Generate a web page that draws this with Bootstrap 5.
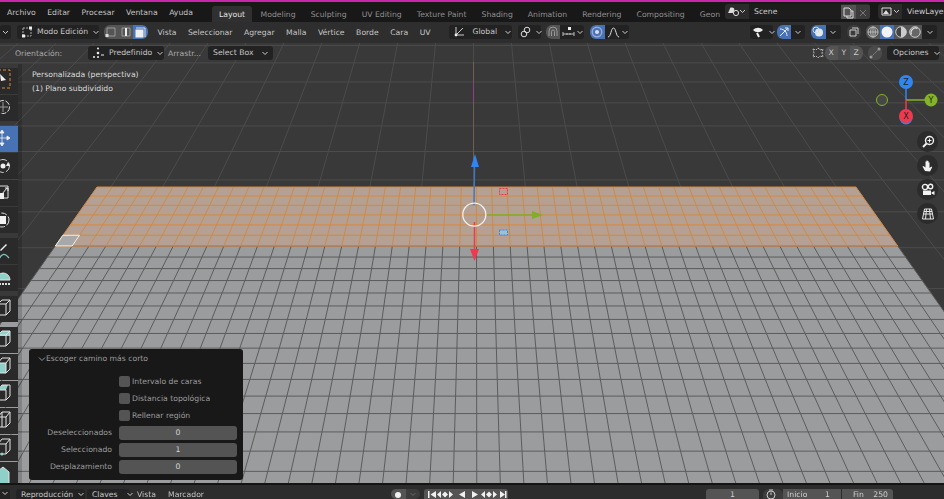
<!DOCTYPE html>
<html lang="es">
<head>
  <meta charset="UTF-8">
  <title>Blender - Modo Edición</title>
  <link href="https://cdn.jsdelivr.net/npm/bootstrap@5.3.0/dist/css/bootstrap.min.css" rel="stylesheet">
  <style>
    html, body { height: 499px; overflow: hidden; }
    body { background: #393939; color: #d0d0d0; font: 7.7px/1 "DejaVu Sans", sans-serif; filter: blur(.3px); }
    svg { display: block; flex: none; }
    .pink-line { height: 2px; background: #c727a9; }
    .top-bar { height: 20px; background: #181818; }
    .top-bar > * { flex: none; }
    .menu-txt { padding-top: 7px; color: #c4c4c4; }
    .top-menu { width: 212px; padding-left: 7px; }
    .top-menu span { margin-right: 11.5px; }
    .work-tab { height: 16px; margin-top: 4px; padding: 5px 7.55px 0; color: #8f8f8f; white-space: nowrap; }
    .work-tab.on { background: #303030; color: #e2e2e2; border-radius: 3px 3px 0 0; width: 40px; padding-left: 7px; margin-right: 1px; }
    .tab-strip { width: 513px; overflow: hidden; }
    .scene-box { height: 15px; margin-top: 2px; background: #2b2b2b; border-radius: 3px; }
    .scene-name { background: #1d1d1d; padding: 4px 5px; color: #cfcfcf; }
    .head-bar { height: 21px; background: #2e2e2e; padding-top: 3px; }
    .head-bar > * { flex: none; }
    .drop { height: 14px; background: #222; border-radius: 3px; padding: 0 4px; color: #c8c8c8; gap: 4px; white-space: nowrap; }
    .drop .chev { margin-left: auto; }
    .tog { height: 14px; width: 14.5px; background: #545454; }
    .tog.on { background: #4772b3; }
    .tog.dim { background: #3c3c3c; }
    .shade-set .tog { width: 14px; }
    .head-menu span { margin-right: 11.5px; color: #c6c6c6; }
    .view-port { height: 440px; }
    .back-grid { position: absolute; inset: 0; }
    .tool-row { position: absolute; left: 0; right: 0; top: 2.5px; height: 14px; }
    .tool-txt { color: #aaa; }
    .side-tools { position: absolute; left: 0; top: 25px; width: 18px; }
    .side-strip { position: absolute; left: 18px; top: 21px; bottom: 0; width: 4px; background: rgba(0,0,0,.16); }
    .tool-btn { height: 26px; background: #2a2a2a; margin-bottom: 1px; }
    .tool-btn.on { background: #4772b3; }
    .tool-gap { margin-top: 5px; }
    .view-info { position: absolute; left: 32px; top: 25px; color: #dcdcdc; line-height: 14px; }
    .nav-stack { position: absolute; left: 917px; top: 88px; gap: 3px; }
    .nav-btn { width: 21px; height: 21px; border-radius: 50%; background: #2b2b2b; }
    .op-panel { position: absolute; left: 29px; top: 306px; width: 214px; height: 131px; background: #181818; border-radius: 3px; padding: 6px 6px 0 9px; color: #9c9c9c; }
    .op-title { height: 18px; }
    .op-row { height: 17px; }
    .op-lbl { width: 74px; margin-right: 7px; text-align: right; }
    .op-check { width: 11px; height: 11px; background: #545454; border-radius: 2px; margin-right: 2px; }
    .op-num { width: 118px; height: 14px; background: #545454; border-radius: 3px; text-align: center; line-height: 14px; color: #d4d4d4; }
    .time-bar { height: 16px; background: #2c2c2c; border-top: 2px solid #141414; padding-top: 4px; }
    .time-bar > * { flex: none; }
    .time-field { height: 10px; background: #545454; border-radius: 3px 3px 0 0; text-align: center; padding-top: 2px; color: #cfcfcf; }
    .time-drop { height: 10px; background: #222; border-radius: 3px 3px 0 0; padding: 2px 0 0 5px; gap: 4px; color: #c8c8c8; }
  </style>
</head>
<body>
  <div class="pink-line"></div>

  <!-- top bar -->
  <div class="top-bar d-flex">
    <div class="top-menu menu-txt d-flex"><span>Archivo</span><span>Editar</span><span>Procesar</span><span>Ventana</span><span>Ayuda</span></div>
    <div class="tab-strip d-flex">
      <div class="work-tab on">Layout</div>
      <div class="work-tab">Modeling</div>
      <div class="work-tab">Sculpting</div>
      <div class="work-tab">UV Editing</div>
      <div class="work-tab">Texture Paint</div>
      <div class="work-tab">Shading</div>
      <div class="work-tab">Animation</div>
      <div class="work-tab">Rendering</div>
      <div class="work-tab">Compositing</div>
      <div class="work-tab">Geon</div>
    </div>
    <div class="scene-box d-flex align-items-center overflow-hidden">
      <svg width="24" height="15" viewBox="0 0 24 15"><circle cx="7" cy="6" r="2.4" fill="#ddd"/><path d="M3 9l3-6 2 6z" fill="#ddd"/><circle cx="11" cy="9" r="2.6" fill="none" stroke="#ddd"/><path d="M15 6l2.5 2.5L20 6" fill="none" stroke="#ccc"/></svg>
      <div class="scene-name" style="width:92px">Scene</div>
      <div class="tog"><svg width="14" height="15" viewBox="0 0 14 15"><path d="M3 3h5l2 2v6H3zM6 11v2h6V6h-2" fill="none" stroke="#ddd"/></svg></div>
      <div class="tog dim"><svg width="14" height="15" viewBox="0 0 14 15"><path d="M4 5l6 6M10 5l-6 6" stroke="#777"/></svg></div>
    </div>
    <div class="scene-box d-flex align-items-center overflow-hidden ms-2" style="width:68px">
      <svg width="24" height="15" viewBox="0 0 24 15"><path d="M4 4h9v7H4z" fill="none" stroke="#ddd"/><path d="M5 10l3-4 3 4z" fill="#ddd"/><path d="M16 6l2.5 2.5L21 6" fill="none" stroke="#ccc"/></svg>
      <div class="scene-name flex-grow-1 text-nowrap">ViewLayer</div>
    </div>
  </div>

  <!-- 3d view header -->
  <div class="head-bar d-flex">
    <div class="drop d-flex align-items-center" style="width:11px;padding:0 0 0 1px"><svg width="9" height="14" viewBox="0 0 9 14"><path d="M2 6l2.5 2.5L7 6" fill="none" stroke="#ccc"/></svg></div>
    <div class="drop d-flex align-items-center" style="width:82px;margin:0 5px 0 6px">
      <svg width="12" height="14" viewBox="0 0 12 14"><path d="M2 3h8v8H2z" fill="none" stroke="#aaa" stroke-dasharray="2 1"/><rect x="8" y="1.5" width="3" height="3" fill="#eee"/><rect x="1" y="9.5" width="3" height="3" fill="#eee"/></svg>
      <span>Modo Edición</span>
      <svg class="chev" width="8" height="14" viewBox="0 0 8 14"><path d="M1.5 6L4 8.5 6.5 6" fill="none" stroke="#ccc"/></svg>
    </div>
    <div class="d-flex" style="margin-right:10px">
      <div class="tog rounded-start"><svg width="14" height="14" viewBox="0 0 14 14"><path d="M3 3h8v8H3z" fill="none" stroke="#999"/><rect x="1.5" y="9" width="3" height="3" fill="#ddd"/></svg></div>
      <div class="tog"><svg width="14" height="14" viewBox="0 0 14 14"><path d="M3 3h8v8H3z" fill="none" stroke="#999"/><path d="M7 3v8" stroke="#eee" stroke-width="2"/></svg></div>
      <div class="tog on rounded-end"><svg width="14" height="14" viewBox="0 0 14 14"><path d="M3 3h9v9" fill="none" stroke="#dde"/><rect x="2.5" y="4.5" width="8" height="8" fill="#eee"/></svg></div>
    </div>
    <div class="head-menu d-flex pt-1" style="width:291px"><span>Vista</span><span>Seleccionar</span><span>Agregar</span><span>Malla</span><span>Vértice</span><span>Borde</span><span>Cara</span><span>UV</span></div>
    <div class="drop d-flex align-items-center" style="width:63px;margin-right:6px;gap:7px">
      <svg width="13" height="14" viewBox="0 0 13 14"><path d="M3 2v8h8M3 10l7-7" fill="none" stroke="#ccc"/><circle cx="3" cy="10" r="1.4" fill="#eee"/></svg>
      <span>Global</span>
      <svg class="chev" width="8" height="14" viewBox="0 0 8 14"><path d="M1.5 6L4 8.5 6.5 6" fill="none" stroke="#ccc"/></svg>
    </div>
    <div class="drop d-flex align-items-center" style="width:23px;margin-right:5px;padding:0 2px">
      <svg width="11" height="14" viewBox="0 0 11 14"><circle cx="7" cy="5" r="2.8" fill="none" stroke="#ddd"/><circle cx="4" cy="9" r="2.8" fill="none" stroke="#ddd"/></svg>
      <svg class="chev" width="8" height="14" viewBox="0 0 8 14"><path d="M1.5 6L4 8.5 6.5 6" fill="none" stroke="#ccc"/></svg>
    </div>
    <div class="tog rounded-start"><svg width="14" height="14" viewBox="0 0 14 14"><path d="M3 11V6a4 4 0 0 1 8 0v5M5.5 11V6.5a1.5 1.5 0 0 1 3 0V11" fill="none" stroke="#999"/></svg></div>
    <div class="drop d-flex align-items-center" style="width:24px;margin-right:6px;padding:0 1px;gap:0;border-radius:0 3px 3px 0">
      <svg width="15" height="14" viewBox="0 0 15 14"><rect x="7" y="2" width="3" height="3" fill="#eee"/><path d="M2 7v4M13 7v4M2 9h11M6 8v2M9 8v2" stroke="#bbb"/></svg>
      <svg class="chev" width="8" height="14" viewBox="0 0 8 14"><path d="M1.5 6L4 8.5 6.5 6" fill="none" stroke="#ccc"/></svg>
    </div>
    <div class="tog on rounded-start"><svg width="14" height="14" viewBox="0 0 14 14"><circle cx="7" cy="7" r="4.8" fill="none" stroke="#9ad" stroke-width="1.4"/><circle cx="7" cy="7" r="2" fill="#dde"/></svg></div>
    <div class="drop d-flex align-items-center" style="width:24px;padding:0 1px;gap:0;border-radius:0 3px 3px 0">
      <svg width="15" height="14" viewBox="0 0 15 14"><path d="M2 12C5 12 5 3 7.5 3S10 12 13 12" fill="none" stroke="#ddd"/></svg>
      <svg class="chev" width="8" height="14" viewBox="0 0 8 14"><path d="M1.5 6L4 8.5 6.5 6" fill="none" stroke="#ccc"/></svg>
    </div>

    <div class="drop d-flex align-items-center" style="margin-left:121px;width:23px;padding:0 2px">
      <svg width="12" height="14" viewBox="0 0 12 14"><path d="M1 5c3-3 7-3 10 0-3 3-7 3-10 0z" fill="#eee"/><path d="M5 8l2 4" stroke="#eee" stroke-width="2"/></svg>
      <svg class="chev" width="8" height="14" viewBox="0 0 8 14"><path d="M1.5 6L4 8.5 6.5 6" fill="none" stroke="#ccc"/></svg>
    </div>
    <div class="tog on rounded-start ms-1"><svg width="14" height="14" viewBox="0 0 14 14"><path d="M3 11L11 3M3 4c4 0 7 3 7 7M8 3h3v3" fill="none" stroke="#e8eef8"/></svg></div>
    <div class="drop d-flex align-items-center justify-content-center" style="width:14px;padding:0;border-radius:0 3px 3px 0;margin-right:6px"><svg width="8" height="14" viewBox="0 0 8 14"><path d="M1.5 6L4 8.5 6.5 6" fill="none" stroke="#ccc"/></svg></div>
    <div class="tog on rounded-start"><svg width="14" height="14" viewBox="0 0 14 14"><circle cx="8" cy="7.5" r="4" fill="#e8e8e8"/><circle cx="5" cy="5" r="3" fill="none" stroke="#cde"/></svg></div>
    <div class="drop d-flex align-items-center justify-content-center" style="width:15px;padding:0;border-radius:0 3px 3px 0;margin-right:6px"><svg width="8" height="14" viewBox="0 0 8 14"><path d="M1.5 6L4 8.5 6.5 6" fill="none" stroke="#ccc"/></svg></div>
    <div class="tog dim rounded me-1"><svg width="14" height="14" viewBox="0 0 14 14"><path d="M5 3h6v6M3 5h6v6H3z" fill="none" stroke="#ccc"/></svg></div>
    <div class="shade-set d-flex" style="margin-left:1px">
      <div class="tog rounded-start"><svg width="14" height="14" viewBox="0 0 14 14"><circle cx="7" cy="7" r="5" fill="none" stroke="#bbb"/><path d="M2 7h10M7 2v10" stroke="#bbb"/><ellipse cx="7" cy="7" rx="2.3" ry="5" fill="none" stroke="#bbb"/></svg></div>
      <div class="tog on"><svg width="14" height="14" viewBox="0 0 14 14"><circle cx="7" cy="7" r="5.5" fill="#f2f2f2"/></svg></div>
      <div class="tog"><svg width="14" height="14" viewBox="0 0 14 14"><circle cx="7" cy="7" r="5.3" fill="#444" stroke="#ccc"/><path d="M7 1.7a5.3 5.3 0 0 1 0 10.6z" fill="#ccc"/></svg></div>
      <div class="tog"><svg width="14" height="14" viewBox="0 0 14 14"><circle cx="7" cy="7" r="5.3" fill="#666" stroke="#ccc"/><path d="M3.5 9.5a4.5 4.5 0 0 1 6-6" fill="none" stroke="#ddd" stroke-width="1.2"/></svg></div>
      <div class="drop d-flex align-items-center justify-content-center" style="width:15px;padding:0;border-radius:0 3px 3px 0"><svg width="8" height="14" viewBox="0 0 8 14"><path d="M1.5 6L4 8.5 6.5 6" fill="none" stroke="#ccc"/></svg></div>
    </div>
  </div>

  <!-- 3d viewport -->
  <div class="view-port position-relative overflow-hidden">
    <svg id="scene" class="back-grid" width="944" height="440" viewBox="0 43 944 440"></svg>
    <div class="side-strip"></div>

    <div class="tool-row d-flex">
      <div class="tool-txt pt-1" style="margin-left:15px;width:73px">Orientación:</div>
      <div class="drop d-flex align-items-center" style="width:76px;margin-right:4px">
        <svg width="13" height="14" viewBox="0 0 13 14"><circle cx="6" cy="2.5" r="1" fill="#eee"/><circle cx="6" cy="7" r="1.3" fill="#eee"/><circle cx="2" cy="11" r="1" fill="#eee"/><circle cx="6" cy="11" r="1" fill="#eee"/><path d="M9 9h3" stroke="#eee"/></svg>
        <span>Predefinido</span>
        <svg class="chev" width="8" height="14" viewBox="0 0 8 14"><path d="M1.5 6L4 8.5 6.5 6" fill="none" stroke="#ccc"/></svg>
      </div>
      <div class="tool-txt pt-1" style="width:40px">Arrastr...</div>
      <div class="drop d-flex align-items-center" style="width:65px;padding-left:5px"><span>Select Box</span><svg class="chev" width="8" height="14" viewBox="0 0 8 14"><path d="M1.5 6L4 8.5 6.5 6" fill="none" stroke="#ccc"/></svg></div>
      <svg style="margin-left:537px" width="15" height="14" viewBox="0 0 15 14"><path d="M3 3l3 1 2-2 2 2 3-1-1 4 1 4-3-1-2 2-2-2-3 1 1-4z" fill="none" stroke="#bbb" stroke-dasharray="2 1"/></svg>
      <div class="d-flex rounded overflow-hidden" style="margin-right:5px">
        <div class="tog text-center" style="width:12.5px;padding-top:3px">X</div>
        <div class="tog text-center" style="width:12.5px;padding-top:3px;background:#4a4a4a">Y</div>
        <div class="tog text-center" style="width:12.5px;padding-top:3px">Z</div>
      </div>
      <div class="tog rounded" style="margin-right:5px;background:#4a4a4a"><svg width="14" height="14" viewBox="0 0 14 14"><path d="M3 11L11 3" stroke="#888" stroke-dasharray="2 1"/><circle cx="3" cy="11" r="1.5" fill="#999"/><circle cx="11" cy="3" r="1.5" fill="#999"/></svg></div>
      <div class="drop d-flex align-items-center" style="width:52px;padding-left:6px"><span>Opciones</span><svg class="chev" width="8" height="14" viewBox="0 0 8 14"><path d="M1.5 6L4 8.5 6.5 6" fill="none" stroke="#ccc"/></svg></div>
    </div>

    <div class="view-info">Personalizada (perspectiva)<br>(1) Plano subdividido</div>

    <!-- left tool column -->
    <div class="side-tools">
      <div class="tool-btn"><svg width="18" height="26" viewBox="0 0 18 26"><rect x="-2" y="2" width="12" height="18" fill="none" stroke="#d98a3a" stroke-dasharray="3 2"/><path d="M0 6l6 6-5 1z" fill="#f2f2f2"/></svg></div>
      <div class="tool-btn"><svg width="18" height="26" viewBox="0 0 18 26"><circle cx="3" cy="12" r="6.5" fill="none" stroke="#ddd" stroke-dasharray="5 1.5"/><path d="M3 7v10M-2 12h10" stroke="#999"/></svg></div>
      <div class="tool-btn on tool-gap"><svg width="18" height="26" viewBox="0 0 18 26"><path d="M2 4l2 3H0zM2 20l2-3H0zM10 12l-3-2v4zM2 7v10M-1 12h8" fill="#f4f4f4" stroke="#f4f4f4" stroke-width=".8"/></svg></div>
      <div class="tool-btn"><svg width="18" height="26" viewBox="0 0 18 26"><circle cx="3" cy="13" r="6.5" fill="none" stroke="#ccc" stroke-dasharray="7 2"/><circle cx="3" cy="13" r="2.5" fill="#f0f0f0"/><path d="M8 9l2 4h-4z" fill="#eee"/></svg></div>
      <div class="tool-btn"><svg width="18" height="26" viewBox="0 0 18 26"><path d="M-1 6h9v12h-9" fill="none" stroke="#ddd"/><rect x="-1" y="13" width="5" height="6" fill="#eee"/><path d="M2 14l5-6M5 8h3v3" fill="none" stroke="#eee"/></svg></div>
      <div class="tool-btn"><svg width="18" height="26" viewBox="0 0 18 26"><circle cx="2" cy="13" r="7" fill="none" stroke="#ddd" stroke-dasharray="6 2"/><rect x="-2" y="9" width="8" height="8" fill="#f2f2f2"/></svg></div>
      <div class="tool-btn tool-gap"><svg width="18" height="26" viewBox="0 0 18 26"><path d="M0 12l6-6 1 1-6 6z" fill="#eee"/><path d="M-1 21c3-6 6-6 10-1" fill="none" stroke="#7ec4b8" stroke-width="1.3"/></svg></div>
      <div class="tool-btn"><svg width="18" height="26" viewBox="0 0 18 26"><path d="M-4 15a7 7 0 0 1 14 0z" fill="#8fd0c8" stroke="#e4e4e4"/><path d="M-4 19h15" stroke="#ddd" stroke-width="2" stroke-dasharray="2 1"/></svg></div>
      <div class="tool-btn tool-gap"><svg width="18" height="26" viewBox="0 0 18 26"><path d="M-2 8l4-4h8v11l-4 4h-8zM-2 8h8l4-4M6 8v11" fill="none" stroke="#e4e4e4"/></svg></div>
      <div class="tool-btn tool-gap"><svg width="18" height="26" viewBox="0 0 18 26"><path d="M-2 8l4-4h8v5h-12z" fill="#8fd0c8"/><path d="M-2 8l4-4h8v11l-4 4h-8zM-2 8h8l4-4M6 8v11" fill="none" stroke="#e4e4e4"/></svg></div>
      <div class="tool-btn"><svg width="18" height="26" viewBox="0 0 18 26"><path d="M-2 9h8v10h-8z" fill="#8fd0c8"/><path d="M-2 9l4-5h8v11l-4 4h-8zM-2 9h8l4-5M6 9v10" fill="none" stroke="#e4e4e4"/></svg></div>
      <div class="tool-btn"><svg width="18" height="26" viewBox="0 0 18 26"><path d="M-2 9l4-5h6l-2 5z" fill="#8fd0c8"/><path d="M-2 9l4-5h8v11l-4 4h-8zM-2 9h8M6 9v10" fill="none" stroke="#e4e4e4"/></svg></div>
      <div class="tool-btn"><svg width="18" height="26" viewBox="0 0 18 26"><path d="M-2 9l4-5h8v11l-4 4h-8zM-2 9h8l4-5M6 9v10M2 4v15" fill="none" stroke="#e4e4e4"/></svg></div>
      <div class="tool-btn"><svg width="18" height="26" viewBox="0 0 18 26"><path d="M-2 9l4-5h8v11l-4 4h-8zM-2 9h8l4-5M6 9v10" fill="none" stroke="#e4e4e4"/><circle cx="2" cy="19" r="1.5" fill="#8fd0c8"/></svg></div>
      <div class="tool-btn"><svg width="18" height="26" viewBox="0 0 18 26"><path d="M-2 24V9l5-4 6 5v14z" fill="#8fd0c8" stroke="#e4e4e4"/></svg></div>
    </div>

    <!-- navigation buttons -->
    <div class="nav-stack d-flex flex-column">
      <div class="nav-btn d-flex align-items-center justify-content-center"><svg width="14" height="14" viewBox="0 0 14 14"><circle cx="8.5" cy="5.5" r="4" fill="none" stroke="#f2f2f2" stroke-width="1.4"/><path d="M6.5 5.5h4M8.5 3.5v4" stroke="#f2f2f2"/><path d="M2 12l3.5-3.5" stroke="#f2f2f2" stroke-width="2"/></svg></div>
      <div class="nav-btn d-flex align-items-center justify-content-center"><svg width="14" height="14" viewBox="0 0 14 14"><path d="M4 12L1.5 7.5l1-.5L4.5 8.5V2.500h1V7V1.500h1V7V2h1v5.500V3.500h1V9l2-1.500.7.7L9 12.500z" fill="#f2f2f2"/></svg></div>
      <div class="nav-btn d-flex align-items-center justify-content-center"><svg width="14" height="14" viewBox="0 0 14 14"><circle cx="4" cy="4" r="2.6" fill="none" stroke="#f2f2f2" stroke-width="1.4"/><circle cx="9.5" cy="3.5" r="2.2" fill="none" stroke="#f2f2f2" stroke-width="1.4"/><rect x="2" y="7.5" width="8" height="4.5" fill="#f2f2f2"/><path d="M10.5 9.5l3-1.5v4l-3-1.5z" fill="#f2f2f2"/></svg></div>
      <div class="nav-btn d-flex align-items-center justify-content-center"><svg width="14" height="14" viewBox="0 0 14 14"><path d="M3.5 2h7l2 10h-11zM2.500 7h9M5.500 2l-1 10M8.500 2l1 10M3 4.500h8" fill="none" stroke="#e8e8e8"/></svg></div>
    </div>

    <!-- last operator panel -->
    <div class="op-panel">
      <div class="op-title d-flex">
        <svg width="8" height="8" viewBox="0 0 8 8"><path d="M1 2.5L4 5.5 7 2.5" fill="none" stroke="#999"/></svg>
        <span>Escoger camino más corto</span>
      </div>
      <div class="op-row d-flex align-items-center"><div class="op-lbl"></div><div class="op-check"></div>Intervalo de caras</div>
      <div class="op-row d-flex align-items-center"><div class="op-lbl"></div><div class="op-check"></div>Distancia topológica</div>
      <div class="op-row d-flex align-items-center"><div class="op-lbl"></div><div class="op-check"></div>Rellenar región</div>
      <div class="op-row d-flex align-items-center"><div class="op-lbl">Deseleccionados</div><div class="op-num">0</div></div>
      <div class="op-row d-flex align-items-center"><div class="op-lbl">Seleccionado</div><div class="op-num">1</div></div>
      <div class="op-row d-flex align-items-center"><div class="op-lbl">Desplazamiento</div><div class="op-num">0</div></div>
    </div>
  </div>

  <!-- timeline header -->
  <div class="time-bar d-flex">
    <div class="time-drop" style="width:10px;padding-left:1px"><svg width="8" height="6" viewBox="0 0 8 6"><path d="M1.5 1L4 3.5 6.5 1" fill="none" stroke="#ccc"/></svg></div>
    <div class="time-drop d-flex" style="width:69px;margin-left:6px">Reproducción<svg width="8" height="6" viewBox="0 0 8 6"><path d="M1.5 2L4 4.5 6.5 2" fill="none" stroke="#ccc"/></svg></div>
    <div class="time-drop d-flex" style="width:43px;margin-left:2px">Claves<svg class="ms-1" width="8" height="6" viewBox="0 0 8 6"><path d="M1.5 2L4 4.5 6.5 2" fill="none" stroke="#ccc"/></svg></div>
    <div class="menu-txt" style="padding-top:2px;margin-left:7px;width:31px">Vista</div>
    <div class="menu-txt" style="padding-top:2px;width:223px">Marcador</div>
    <div class="tog rounded-start" style="height:10px"><svg width="14" height="10" viewBox="0 0 14 10"><circle cx="7" cy="6" r="3" fill="#f0f0f0"/></svg></div>
    <div class="tog dim rounded-end" style="height:10px;margin-right:4px"><svg width="14" height="10" viewBox="0 0 14 10"><path d="M4.5 4L7 6.5 9.5 4" fill="none" stroke="#666"/></svg></div>
    <div class="d-flex" style="width:84px;height:10px;background:#545454;border-radius:3px 3px 0 0;margin-right:198px">
      <svg width="84" height="10" viewBox="0 1 84 10"><g fill="#f0f0f0"><path d="M4 3h1.5v7H4zM12 3v7L6.5 6.5zM18 6.5l3-3 3 3-3 3zM17 3v7l-4-3.5zM25 3v7l4-3.5zM41 3v7l-6-3.5zM48 3v7l6-3.5zM62 6.5l3-3 3 3-3 3zM61 3v7l-4-3.5zM69 3v7l4-3.5zM76 3v7l5-3.5zM81 3h1.5v7H81z"/></g></svg>
    </div>
    <div class="time-field" style="width:53px;margin-right:4px">1</div>
    <div class="d-flex" style="width:130px">
      <div class="tog rounded-top" style="height:10px;width:20px;background:#3c3c3c"><svg width="20" height="10" viewBox="0 1 20 10"><circle cx="8" cy="7" r="4" fill="none" stroke="#ccc"/><path d="M8 7V4.500M6 2h4" stroke="#ccc"/></svg></div>
      <div class="time-field d-flex justify-content-between" style="width:58px;padding:2px 11px 0 4px;border-radius:0;margin-right:1px"><span>Inicio</span><span>1</span></div>
      <div class="time-field d-flex justify-content-between" style="width:51px;padding:2px 5px 0 11px;border-radius:0 3px 0 0"><span>Fin</span><span>250</span></div>
    </div>
  </div>

  <script src="https://cdn.jsdelivr.net/npm/bootstrap@5.3.0/dist/js/bootstrap.bundle.min.js"></script>
  <script>
    const NS = 'http://www.w3.org/2000/svg';
    const scene = document.getElementById('scene');
    const VY = -350;
    const PLANE_X = 476, FLOOR_X = 473.5;
    const N = 50, OFF_L = -0.7058, OFF_R = 0.7076;
    const rowStep = 0.0000307, bigStep = 0.000107;

    function add(tag, attrs) {
      const el = document.createElementNS(NS, tag);
      for (const k in attrs) el.setAttribute(k, attrs[k]);
      scene.appendChild(el);
      return el;
    }
    function line(x1, y1, x2, y2, stroke, w) {
      add('line', { x1, y1, x2, y2, stroke, 'stroke-width': w || 1 });
    }
    const xAt = (off, y) => PLANE_X + off * (y - VY);
    const rowY = r => 1 / (1 / 537 - r * rowStep) + VY;

    // floor grid behind the plane
    add('rect', { x: 0, y: 43, width: 944, height: 440, fill: '#393939' });
    for (let i = -20; i <= 20; i++) {
      const off = i * 0.0965;
      line(FLOOR_X + off * (43 - VY), 43, FLOOR_X + off * (483 - VY), 483, '#4c4c4c');
    }
    for (let k = -4; k <= 6; k++) {
      const y = 1 / (0.001887 + k * bigStep) + VY;
      line(0, y, 944, y, '#4c4c4c');
    }

    // subdivided plane: gray part, then selected band
    const Y_SEL = rowY(6);
    const poly = (y1, y2, fill) => add('polygon', {
      points: [xAt(OFF_L, y1), y1, xAt(OFF_R, y1), y1, xAt(OFF_R, y2), y2, xAt(OFF_L, y2), y2].join(','), fill });
    poly(Y_SEL, 490, '#9b9c9e');
    poly(187, Y_SEL, '#b5a194');
    for (let r = 6; rowY(r) < 490; r++) {
      const y = rowY(r);
      line(xAt(OFF_L, y), y, xAt(OFF_R, y), y, '#5c5c5c');
    }
    for (let c = 0; c <= N; c++) {
      const off = OFF_L + (OFF_R - OFF_L) * c / N;
      line(xAt(off, Y_SEL), Y_SEL, xAt(off, 490), 490, '#5c5c5c');
      line(xAt(off, 187), 187, xAt(off, Y_SEL), Y_SEL, '#cd8a48');
    }
    for (let r = 0; r <= 6; r++) {
      const y = rowY(r);
      line(xAt(OFF_L, y), y, xAt(OFF_R, y), y, '#d6883c', r === 0 || r === 6 ? 1.2 : 1);
    }

    // active face
    const y5 = rowY(5), y6 = Y_SEL, off1 = OFF_L + (OFF_R - OFF_L) / N;
    add('polygon', {
      points: [xAt(OFF_L, y6), y6, xAt(off1, y6), y6, xAt(off1, y5), y5, xAt(OFF_L, y5), y5].join(','),
      fill: '#a8a8a8', stroke: '#f0f0f0', 'stroke-width': 1
    });

    // z axis and move gizmo
    line(473.5, 62, 473.5, 160, '#6e5f52');
    line(473.5, 82, 473.5, 102, '#8e3f86');
    line(474.5, 165, 474, 205, '#3f78c4', 1.5);
    add('path', { d: 'M475 154l4 13h-8z', fill: '#2f86f0' });
    line(487, 215, 534, 215, '#83ad27', 1.5);
    add('path', { d: 'M532 211l11 4-11 4z', fill: '#83ad27' });
    line(474.5, 222, 474.5, 250, '#f0384f', 1.5);
    add('path', { d: 'M470 249h9l-4.5 12z', fill: '#f0384f' });
    add('rect', { x: 499.5, y: 188.5, width: 8, height: 6, fill: 'none', stroke: '#f0384f', 'stroke-dasharray': '2 1' });
    add('rect', { x: 499.5, y: 230, width: 8, height: 5, fill: '#9fc0d0', stroke: '#3f8ae0', 'stroke-dasharray': '2 1' });
    add('circle', { cx: 474.3, cy: 214.7, r: 11.5, fill: 'none', stroke: '#f0f0f0', 'stroke-width': 1.3 });

    // orientation gizmo
    line(906, 100, 906, 85, '#2f86f0', 1.5);
    line(906, 100, 926, 100, '#83b327', 1.5);
    line(906, 100, 906, 112, '#f0384f', 1.5);
    add('circle', { cx: 882, cy: 100, r: 5.5, fill: '#474747', stroke: '#83b327', 'stroke-width': 1 });
    add('circle', { cx: 906, cy: 118, r: 6.5, fill: '#2f86f0' });
    add('circle', { cx: 906, cy: 116, r: 7, fill: '#f0384f' });
    add('circle', { cx: 906, cy: 82, r: 7, fill: '#2f86f0' });
    add('circle', { cx: 931, cy: 100, r: 6.5, fill: '#83b327' });
    [['X', 906, 119], ['Y', 931, 103], ['Z', 906, 85]].forEach(([t, x, y]) => {
      const label = add('text', { x, y, 'text-anchor': 'middle', 'font-size': 8, fill: '#222' });
      label.textContent = t;
    });
  </script>
</body>
</html>
